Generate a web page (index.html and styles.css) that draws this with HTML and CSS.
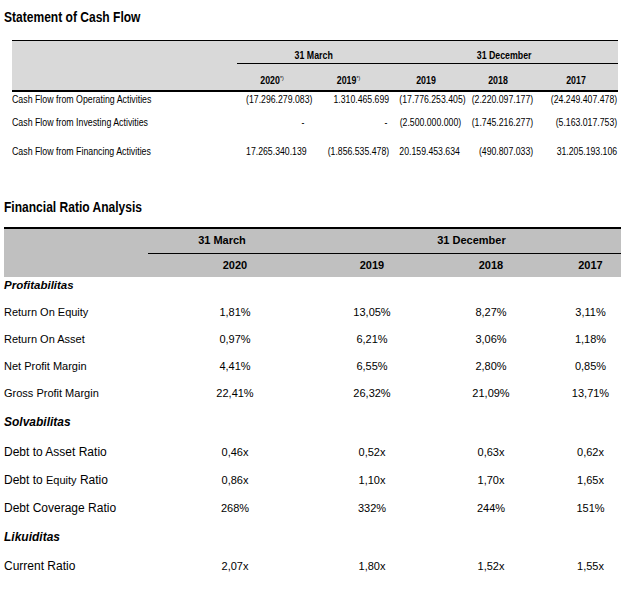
FILE: index.html
```html
<!DOCTYPE html>
<html lang="en">
<head>
<meta charset="utf-8">
<title>Statement of Cash Flow</title>
<link rel="stylesheet" href="styles.css">
</head>
<body>
<h1 class="title">Statement of Cash Flow</h1>
<div class="cf">
  <div class="cf-head">
    <div class="cf-grid cf-groups">
      <span></span>
      <span class="grp span2"><span class="nar">31 March</span></span>
      <span class="grp span3"><span class="nar">31 December</span></span>
    </div>
    <div class="cf-grid cf-years">
      <span></span>
      <span class="yr">2020<sup>*)</sup></span>
      <span class="yr">2019<sup>*)</sup></span>
      <span class="yr">2019</span>
      <span class="yr">2018</span>
      <span class="yr">2017</span>
    </div>
  </div>
  <div class="cf-grid cf-row r1">
    <span class="lbl">Cash Flow from Operating Activities</span>
    <span class="num">(17.296.279.083)</span>
    <span class="num">1.310.465.699</span>
    <span class="num">(17.776.253.405)</span>
    <span class="num">(2.220.097.177)</span>
    <span class="num">(24.249.407.478)</span>
  </div>
  <div class="cf-grid cf-row r2">
    <span class="lbl">Cash Flow from Investing Activities</span>
    <span class="num dash">-</span>
    <span class="num dash">-</span>
    <span class="num">(2.500.000.000)</span>
    <span class="num">(1.745.216.277)</span>
    <span class="num">(5.163.017.753)</span>
  </div>
  <div class="cf-grid cf-row r3">
    <span class="lbl">Cash Flow from Financing Activities</span>
    <span class="num">17.265.340.139</span>
    <span class="num">(1.856.535.478)</span>
    <span class="num pos">20.159.453.634</span>
    <span class="num">(490.807.033)</span>
    <span class="num">31.205.193.106</span>
  </div>
</div>

<h1 class="title title2">Financial Ratio Analysis</h1>
<div class="fr">
  <div class="fr-head">
    <div class="fr-grid fr-groups">
      <span></span>
      <span class="grp mar">31 March</span>
      <span class="grp span3">31 December</span>
    </div>
    <div class="fr-grid fr-years">
      <span></span>
      <span>2020</span>
      <span>2019</span>
      <span>2018</span>
      <span>2017</span>
    </div>
  </div>
  <div class="fr-grid fr-row sect prof"><span class="lbl">Profitabilitas</span></div>
  <div class="fr-grid fr-row h27"><span class="lbl">Return On Equity</span><span>1,81%</span><span>13,05%</span><span>8,27%</span><span>3,11%</span></div>
  <div class="fr-grid fr-row h27"><span class="lbl">Return On Asset</span><span>0,97%</span><span>6,21%</span><span>3,06%</span><span>1,18%</span></div>
  <div class="fr-grid fr-row h27"><span class="lbl">Net Profit Margin</span><span>4,41%</span><span>6,55%</span><span>2,80%</span><span>0,85%</span></div>
  <div class="fr-grid fr-row h27"><span class="lbl">Gross Profit Margin</span><span>22,41%</span><span>26,32%</span><span>21,09%</span><span>13,71%</span></div>
  <div class="fr-grid fr-row sect h30"><span class="lbl">Solvabilitas</span></div>
  <div class="fr-grid fr-row big h30"><span class="lbl">Debt to Asset Ratio</span><span>0,46x</span><span>0,52x</span><span>0,63x</span><span>0,62x</span></div>
  <div class="fr-grid fr-row big h27"><span class="lbl">Debt to <span class="small">Equity</span> Ratio</span><span>0,86x</span><span>1,10x</span><span>1,70x</span><span>1,65x</span></div>
  <div class="fr-grid fr-row big h28"><span class="lbl">Debt Coverage Ratio</span><span>268%</span><span>332%</span><span>244%</span><span>151%</span></div>
  <div class="fr-grid fr-row sect h30"><span class="lbl">Likuiditas</span></div>
  <div class="fr-grid fr-row big h28"><span class="lbl">Current Ratio</span><span>2,07x</span><span>1,80x</span><span>1,52x</span><span>1,55x</span></div>
</div>
</body>
</html>
```

FILE: styles.css
```css
* { box-sizing: border-box; }

body {
  margin: 0;
  background: #fff;
  color: #000;
  font-family: "Liberation Sans", Arial, sans-serif;
}

/* Arial Narrow look: Liberation Sans compressed horizontally */
.title {
  margin: 8px 0 0 4px;
  font: bold 14px/18px "Liberation Sans", Arial, sans-serif;
  transform: scaleX(0.86);
  transform-origin: left center;
}

.title2 {
  margin-top: 32px;
}

/* ---------- Cash flow table ---------- */
.cf {
  margin: 14px 0 0 12px;
  width: 606px;
  font: 10px/12px "Liberation Sans", Arial, sans-serif;
}

.cf-grid {
  display: grid;
  grid-template-columns: 225px 70px 83px 72px 72px 84px;
}

.cf-head {
  background: #d9d9d9;
  border-top: 1px solid #000;
  border-bottom: 2px solid #000;
  font-weight: bold;
}

.cf-groups .grp {
  padding: 9px 0 1px;
  border-bottom: 1px solid #000;
  text-align: center;
}

.nar {
  display: inline-block;
  transform: scaleX(0.88);
}

.span2 { grid-column: span 2; }
.span3 { grid-column: span 3; }

.cf-years .yr {
  padding: 11px 0 3px;
  text-align: center;
  transform: scaleX(0.88);
}

sup {
  font-size: 6px;
  line-height: 0;
  vertical-align: 4px;
  font-weight: normal;
}

.cf-row {
  align-items: center;
}

.cf-row.r1 { height: 16px; }
.cf-row.r2 { height: 30px; }
.cf-row.r3 { height: 28px; }

.cf-row .lbl {
  transform: scaleX(0.88);
  transform-origin: left center;
  white-space: nowrap;
}

.cf-row .num {
  text-align: right;
  padding-right: 1px;
  white-space: nowrap;
  transform: scaleX(0.87);
  transform-origin: right center;
}

.cf-row .dash { padding-right: 3px; }
.cf-row .pos { padding-right: 5px; }

/* ---------- Ratio table ---------- */
.fr {
  margin: 11px 0 0 4px;
  width: 617px;
  font-size: 11px;
  line-height: 13px;
}

.fr-grid {
  display: grid;
  grid-template-columns: 144px 174px 100px 138px 61px;
}

.fr-head {
  background: #c0c0c0;
  border-top: 2px solid #000;
  font-weight: bold;
}

.fr-groups .grp {
  padding: 5px 0 6px;
  border-bottom: 1px solid #000;
  text-align: center;
}

.fr-groups .mar { padding-right: 26px; }

.fr-years span {
  padding: 5px 0;
  text-align: center;
}

.fr-row {
  align-items: center;
  text-align: center;
}

.fr-row .lbl { text-align: left; }

.fr-row.sect .lbl {
  font-weight: bold;
  font-style: italic;
  font-size: 12px;
}

.fr-row.prof { height: 22px; padding-bottom: 6px; }
.fr-row.prof .lbl { font-size: 11.5px; }

.h27 { height: 27px; }
.h28 { height: 28px; }
.h30 { height: 30px; }

.fr-row.big .lbl { font-size: 12px; }
.fr-row.big .small { font-size: 11px; }
```
